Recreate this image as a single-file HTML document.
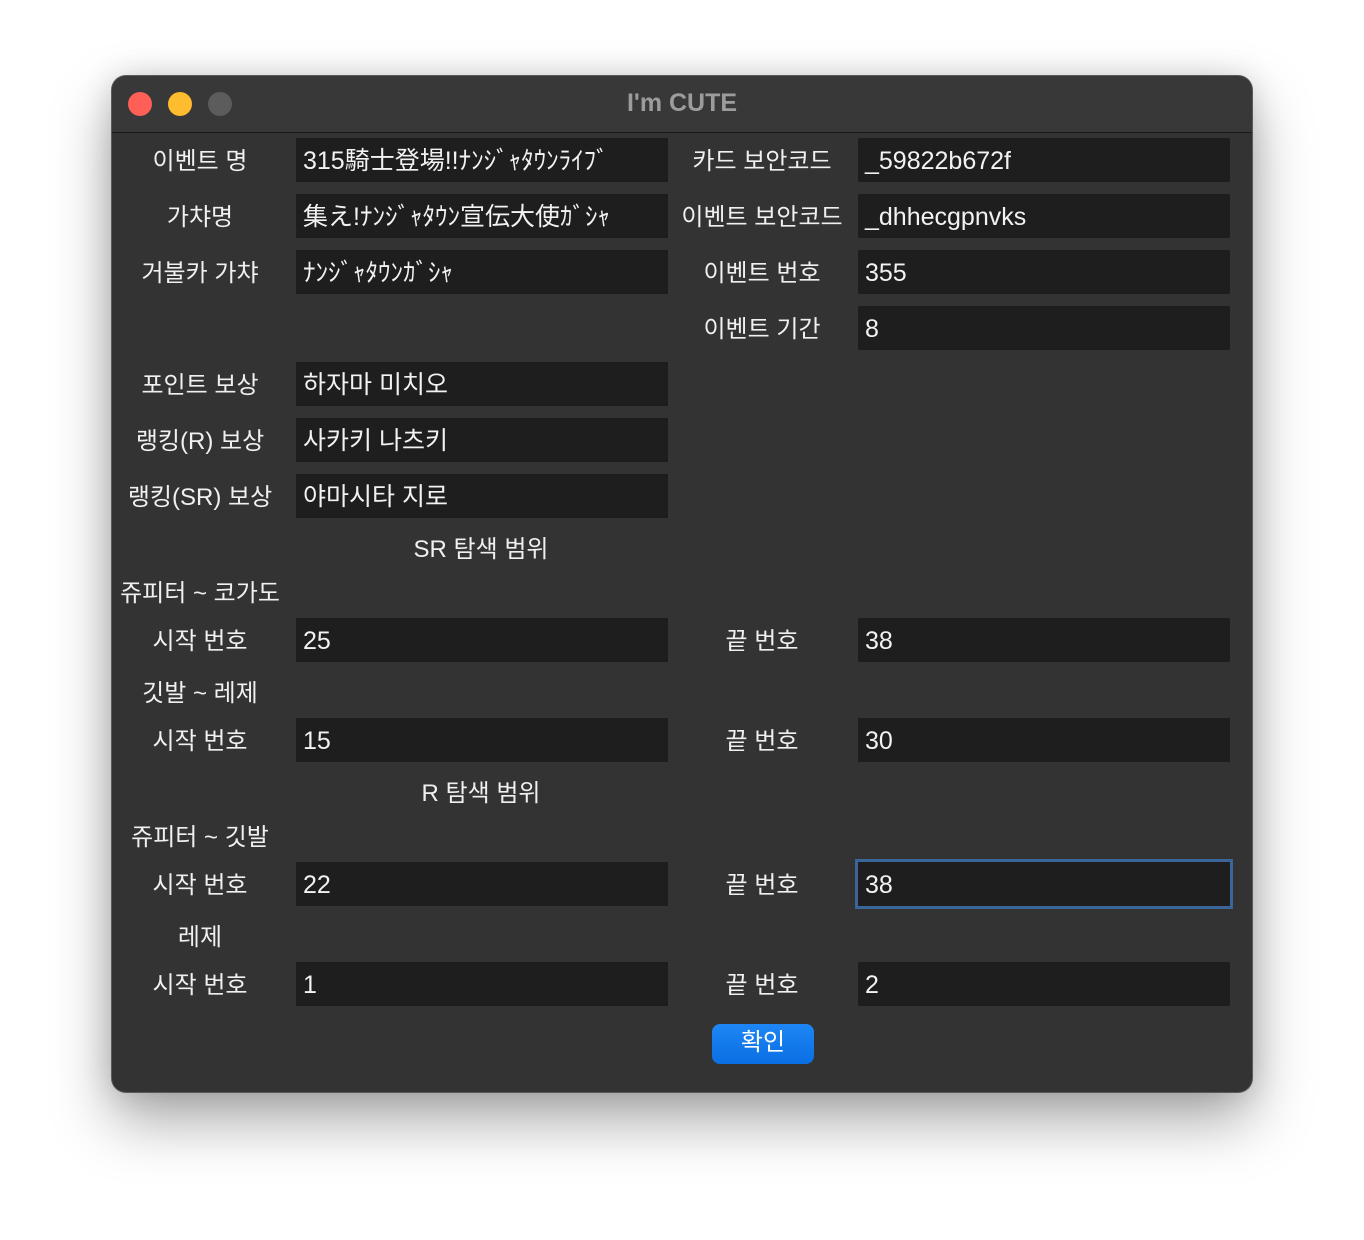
<!DOCTYPE html>
<html><head><meta charset="utf-8"><style>
html,body{margin:0;padding:0;width:1364px;height:1240px;background:#fff;overflow:hidden}
body{font-family:"Liberation Sans","Noto Sans CJK KR","Noto Sans CJK JP",sans-serif;}
.win{position:absolute;left:112px;top:76px;width:1140px;height:1016px;background:#333333;border-radius:14px;box-shadow:0 0 0 1px #5a5a5a,0 28px 60px rgba(0,0,0,0.35),0 0 30px rgba(0,0,0,0.15);overflow:hidden}
.tb{position:absolute;left:0;top:0;width:1140px;height:56px;background:#383838;border-bottom:1px solid #1a1a1a}
.dot{position:absolute;top:16px;width:24px;height:24px;border-radius:50%}
.title{position:absolute;left:0;width:1140px;top:13px;text-align:center;color:#9c9c9c;font-weight:bold;font-size:25px}
.l{position:absolute;height:44px;line-height:44px;padding-top:2px;box-sizing:border-box;color:#f0f0f0;font-size:24px;text-align:center;white-space:nowrap}
.f{position:absolute;height:44px;line-height:42px;padding-top:2px;background:#1e1e1e;color:#f2f2f2;font-size:25px;padding-left:7px;box-sizing:border-box;white-space:nowrap;overflow:hidden}
.fl{left:184px;width:372px}.fr{left:746px;width:372px}
.ll{left:0;width:176px}.lr{left:560px;width:180px}
</style></head><body>
<div class="win">
<div class="tb">
<div class="dot" style="left:16px;background:#fe5f57"></div>
<div class="dot" style="left:56px;background:#febc2e"></div>
<div class="dot" style="left:96px;background:#5c5c5c"></div>
<div class="title">I'm CUTE</div>
</div>

<div class="l ll" style="top:62px">이벤트 명</div><div class="f fl" style="top:62px">315騎士登場!!ﾅﾝｼﾞｬﾀｳﾝﾗｲﾌﾞ</div>
<div class="l lr" style="top:62px">카드 보안코드</div><div class="f fr" style="top:62px">_59822b672f</div>
<div class="l ll" style="top:118px">가챠명</div><div class="f fl" style="top:118px">集え!ﾅﾝｼﾞｬﾀｳﾝ宣伝大使ｶﾞｼｬ</div>
<div class="l lr" style="top:118px">이벤트 보안코드</div><div class="f fr" style="top:118px">_dhhecgpnvks</div>
<div class="l ll" style="top:174px">거불카 가챠</div><div class="f fl" style="top:174px">ﾅﾝｼﾞｬﾀｳﾝｶﾞｼｬ</div>
<div class="l lr" style="top:174px">이벤트 번호</div><div class="f fr" style="top:174px">355</div>
<div class="l lr" style="top:230px">이벤트 기간</div><div class="f fr" style="top:230px">8</div>
<div class="l ll" style="top:286px">포인트 보상</div><div class="f fl" style="top:286px">하자마 미치오</div>
<div class="l ll" style="top:342px">랭킹(R) 보상</div><div class="f fl" style="top:342px">사카키 나츠키</div>
<div class="l ll" style="top:398px">랭킹(SR) 보상</div><div class="f fl" style="top:398px">야마시타 지로</div>
<div class="l" style="top:450px;left:269px;width:200px">SR 탐색 범위</div>
<div class="l ll" style="top:494px">쥬피터 ~ 코가도</div>
<div class="l ll" style="top:542px">시작 번호</div><div class="f fl" style="top:542px">25</div>
<div class="l lr" style="top:542px">끝 번호</div><div class="f fr" style="top:542px">38</div>
<div class="l ll" style="top:594px">깃발 ~ 레제</div>
<div class="l ll" style="top:642px">시작 번호</div><div class="f fl" style="top:642px">15</div>
<div class="l lr" style="top:642px">끝 번호</div><div class="f fr" style="top:642px">30</div>
<div class="l" style="top:694px;left:269px;width:200px">R 탐색 범위</div>
<div class="l ll" style="top:738px">쥬피터 ~ 깃발</div>
<div class="l ll" style="top:786px">시작 번호</div><div class="f fl" style="top:786px">22</div>
<div class="l lr" style="top:786px">끝 번호</div><div class="f fr" style="top:786px;box-shadow:0 0 0 3px #3b6699">38</div>
<div class="l ll" style="top:838px">레제</div>
<div class="l ll" style="top:886px">시작 번호</div><div class="f fl" style="top:886px">1</div>
<div class="l lr" style="top:886px">끝 번호</div><div class="f fr" style="top:886px">2</div>
<div style="position:absolute;left:600px;top:948px;width:102px;height:40px;border-radius:8px;background:linear-gradient(#1e86f5,#0a6fe3);color:#fff;font-size:24px;line-height:38px;text-align:center">확인</div>
</div>
</body></html>
